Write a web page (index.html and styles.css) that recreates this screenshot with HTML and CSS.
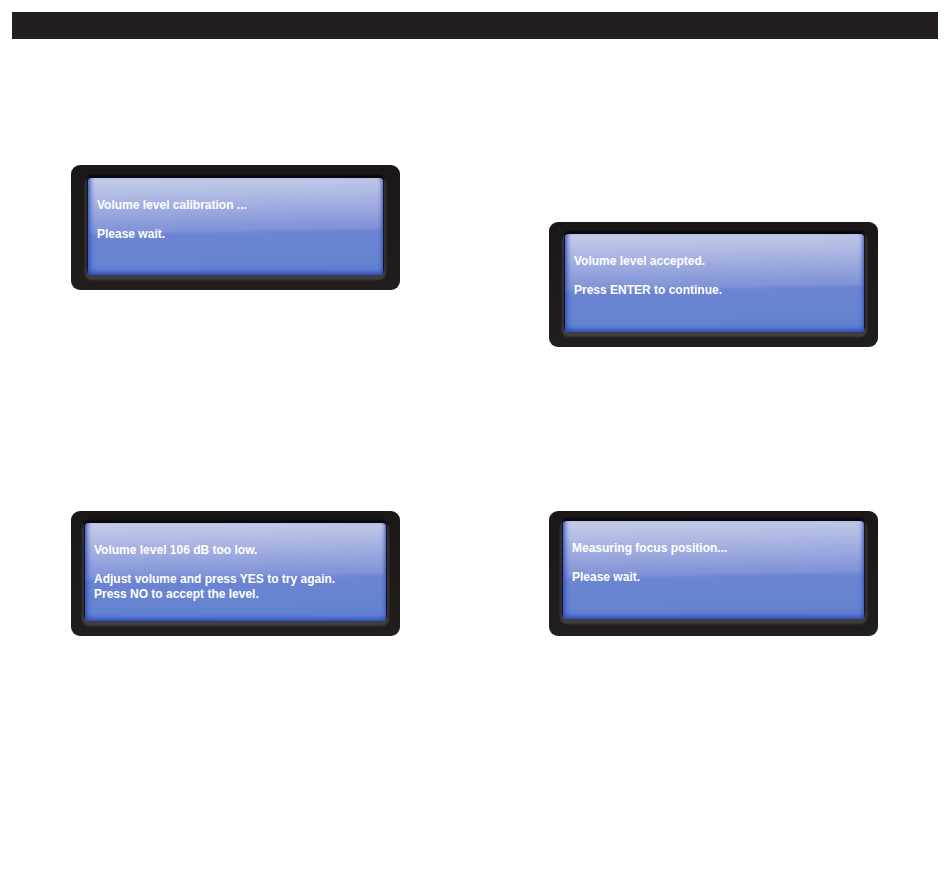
FILE: index.html
```html
<!DOCTYPE html>
<html lang="en">
<head>
<meta charset="utf-8">
<meta name="viewport" content="width=device-width, initial-scale=1">
<title>Volume level calibration</title>
<link rel="stylesheet" href="styles.css">
</head>
<body>
<header class="bar"></header>
<main class="board">
  <section class="device device-inset">
    <div class="screen">
      <p>Volume level calibration ...</p>
      <p>Please wait.</p>
    </div>
  </section>
  <section class="device device-lowered">
    <div class="screen">
      <p>Volume level accepted.</p>
      <p>Press ENTER to continue.</p>
    </div>
  </section>
  <section class="device">
    <div class="screen">
      <p>Volume level 106 dB too low.</p>
      <p>Adjust volume and press YES to try again.<br>Press NO to accept the level.</p>
    </div>
  </section>
  <section class="device device-raised">
    <div class="screen">
      <p>Measuring focus position...</p>
      <p>Please wait.</p>
    </div>
  </section>
</main>
</body>
</html>
```
FILE: styles.css
```css
* {
  box-sizing: border-box;
}

body {
  margin: 0;
  padding: 12px;
  background: #fff;
  font-family: "Liberation Sans", Arial, sans-serif;
}

.bar {
  height: 27px;
  background: #231f20;
}

.board {
  display: grid;
  grid-template-columns: 1fr 1fr;
  align-items: start;
  gap: 164px 149px;
  padding: 126px 60px 0 59px;
}

.device {
  display: flex;
  min-height: 125px;
  padding: 12px 14px 15px;
  border-radius: 9px;
  background: linear-gradient(#1b1716, #211e1d);
}

.device-inset {
  padding: 13px 17px 15px;
}

.device-lowered {
  margin-top: 57px;
  padding: 12px 14px 15px 16px;
}

.device-raised {
  padding: 10px 14px 17px;
}

.screen {
  flex: 1;
  padding: 20px 8px 0 9px;
  border-radius: 4px;
  background: linear-gradient(179deg, #c6cde9 0%, #b3bce4 16%, #98a6de 36%, #8093d8 53%, #6c84d2 57%, #6684d0 80%, #607fd0 100%);
  box-shadow:
    inset 3px -3px 5px -1px #2f4fc0,
    inset -2px -2px 4px -1px #3552b4,
    0 -2px 2px 1px #080810,
    0 2px 2px 3px #403e3e;
  color: #fff;
  font-size: 12px;
  font-weight: bold;
  line-height: 15px;
}

.screen p {
  margin: 0 0 14px;
}
```
